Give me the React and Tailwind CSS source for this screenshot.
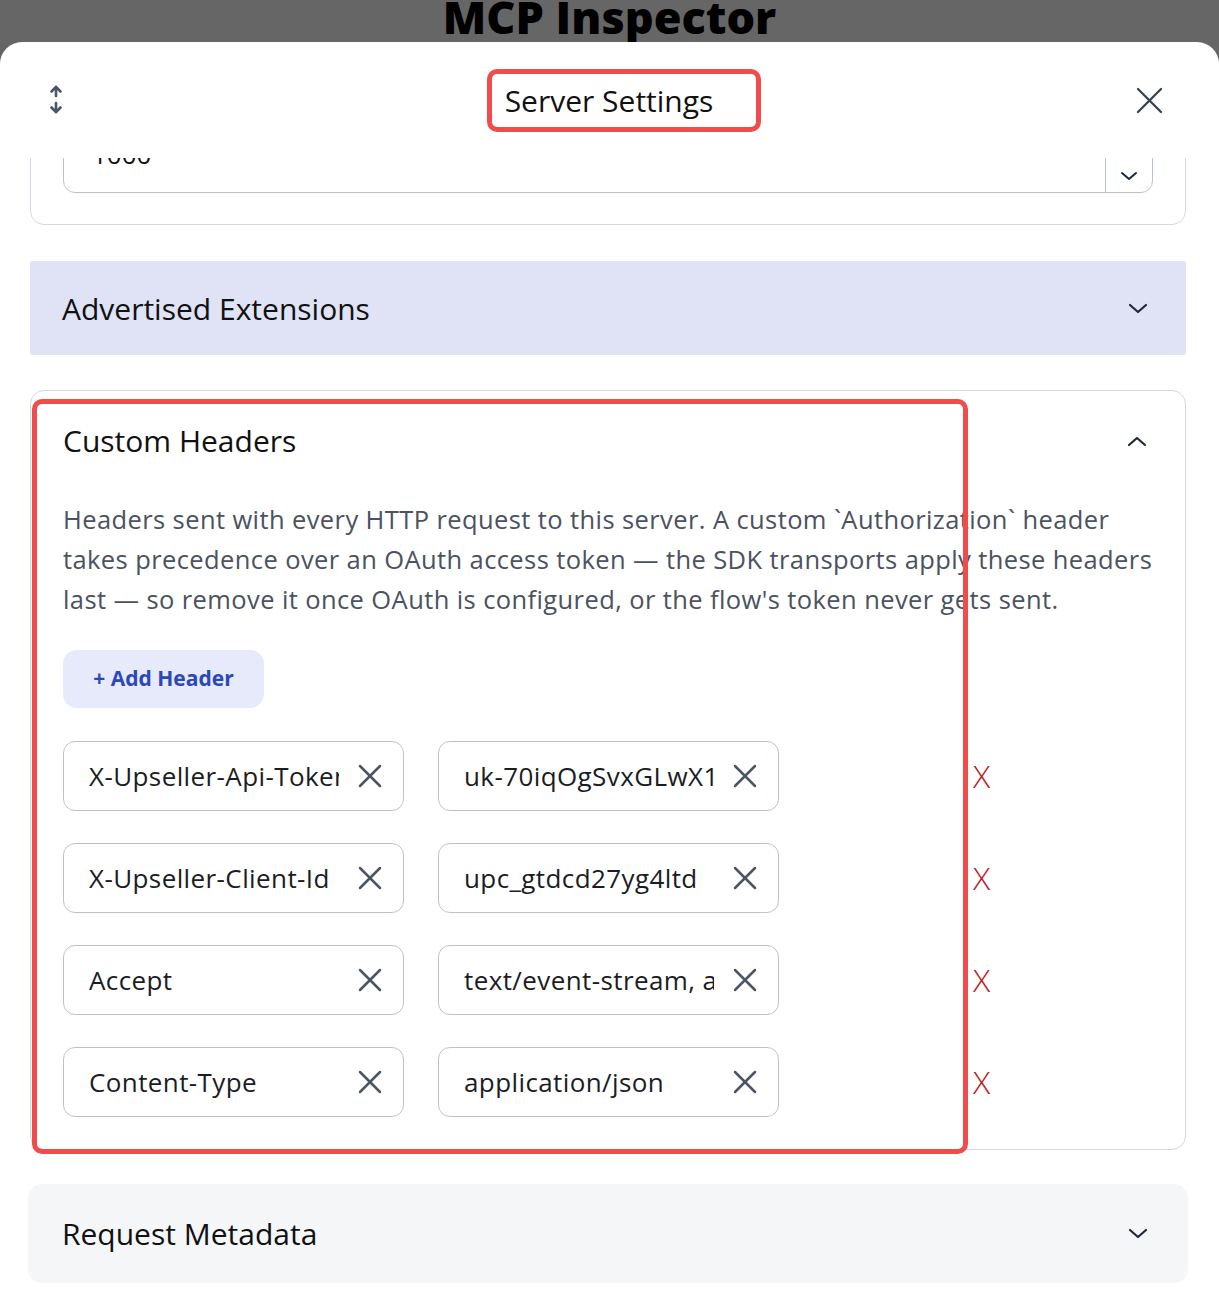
import React from "react";

const ChevronDown = ({ small }) =>
  small ? (
    <svg width="18" height="10" viewBox="0 0 18 10" fill="none">
      <polyline points="2,2 9,8 16,2" stroke="#1f2937" strokeWidth="2" strokeLinecap="round" strokeLinejoin="round" />
    </svg>
  ) : (
    <svg width="20" height="11" viewBox="0 0 20 11" fill="none">
      <polyline points="2,2 10,9 18,2" stroke="#1f2937" strokeWidth="2.2" strokeLinecap="round" strokeLinejoin="round" />
    </svg>
  );

const ChevronUp = () => (
  <svg width="20" height="11" viewBox="0 0 20 11" fill="none">
    <polyline points="2,9 10,2 18,9" stroke="#1f2937" strokeWidth="2.2" strokeLinecap="round" strokeLinejoin="round" />
  </svg>
);

const XIcon = ({ size = 24, stroke = "#4b5563", width = 2.5 }) => (
  <svg width={size} height={size} viewBox={`0 0 ${size} ${size}`} fill="none">
    <line x1="2" y1="2" x2={size - 2} y2={size - 2} stroke={stroke} strokeWidth={width} strokeLinecap="round" />
    <line x1={size - 2} y1="2" x2="2" y2={size - 2} stroke={stroke} strokeWidth={width} strokeLinecap="round" />
  </svg>
);

const ArrowsIcon = () => (
  <svg width="14" height="32" viewBox="0 0 14 32" fill="none" stroke="#4b5563" strokeWidth="2.6" strokeLinecap="round" strokeLinejoin="round">
    <line x1="7" y1="3" x2="7" y2="12" />
    <polyline points="2.5,7.5 7,3 11.5,7.5" />
    <line x1="7" y1="19" x2="7" y2="28" />
    <polyline points="2.5,23.5 7,28 11.5,23.5" />
  </svg>
);

const headers = [
  { key: "X-Upseller-Api-Token", value: "uk-70iqOgSvxGLwX1abcdef" },
  { key: "X-Upseller-Client-Id", value: "upc_gtdcd27yg4ltd" },
  { key: "Accept", value: "text/event-stream, application/json" },
  { key: "Content-Type", value: "application/json" },
];

const HeaderInput = ({ value }) => (
  <div className="flex items-center h-[70px] w-[341px] border border-[#bcc3d0] rounded-[12px] pl-[25px] pr-[21px] bg-white">
    <div className="flex-1 overflow-hidden whitespace-nowrap text-[26px] tracking-[0.4px] text-[#1a1d24]">{value}</div>
    <span className="ml-[19px] shrink-0">
      <XIcon />
    </span>
  </div>
);

export default function App() {
  return (
    <div className="h-[1304px] w-full flex flex-col bg-[#666666] overflow-hidden font-['Open_Sans',_sans-serif]">
      <div className="h-[42px] shrink-0 overflow-hidden flex justify-center">
        <h1 className="text-[45px] leading-[42px] -mt-[4px] font-extrabold text-black">MCP Inspector</h1>
      </div>

      <div className="flex-1 flex flex-col bg-white rounded-t-[22px] overflow-hidden">
        {/* header */}
        <div className="h-[116px] shrink-0 grid grid-cols-[1fr_auto_1fr] items-center pl-[49px] pr-[56px]">
          <div>
            <ArrowsIcon />
          </div>
          <div className="ml-[36px]">
            <span className="inline-block border-[5px] border-[#f24b4b] rounded-[10px] pl-[13px] pr-[43px] py-[8px] text-[30px] leading-[37px] text-[#111]">
              Server Settings
            </span>
          </div>
          <div className="flex justify-end">
            <XIcon size={27} stroke="#374151" width={2.3} />
          </div>
        </div>

        {/* scroll area */}
        <div className="flex-1 overflow-hidden">
          <div className="pl-[30px] pr-[33px] flex flex-col">
            <div className="-mt-[68px] border border-[#d3d8e2] rounded-[14px] px-8 pt-8 pb-[31px]">
              <div className="flex items-stretch h-[70px] border border-[#bcc3d0] rounded-[12px]">
                <div className="flex-1 flex items-center pl-[28px] pb-[8px] text-[26px] text-[#111]">1000</div>
                <div className="w-[47px] border-l border-[#bcc3d0] flex items-end justify-center pb-[11px]">
                  <ChevronDown small />
                </div>
              </div>
            </div>

            <div className="mt-[36px] h-[94px] bg-[#dfe3f5] rounded-[3px] flex items-center justify-between pl-8 pr-[38px]">
              <span className="text-[30px] text-[#111]">Advertised Extensions</span>
              <ChevronDown />
            </div>

            <div className="relative mt-[35px] border border-[#d3d8e2] rounded-[14px] px-8 pt-8 pb-8">
              <div className="flex items-center justify-between pr-[6px]">
                <span className="text-[30px] leading-[36px] text-[#111]">Custom Headers</span>
                <ChevronUp />
              </div>
              <p className="mt-[40px] text-[25.5px] leading-[40px] tracking-[0.4px] text-[#4b5260] whitespace-nowrap">
                Headers sent with every HTTP request to this server. A custom `Authorization` header
                <br />
                takes precedence over an OAuth access token — the SDK transports apply these headers
                <br />
                last — so remove it once OAuth is configured, or the flow's token never gets sent.
              </p>
              <button className="mt-[31px] h-[58px] w-[201px] rounded-[14px] bg-[#e6eafb] text-[21px] font-bold text-[#2b47b9]">
                + Add Header
              </button>
              <div className="mt-[33px] flex flex-col gap-8">
                {headers.map((h) => (
                  <div key={h.key} className="flex items-center gap-[34px]">
                    <HeaderInput value={h.key} />
                    <HeaderInput value={h.value} />
                    <span className="ml-[160px] text-[32px] leading-none font-light text-[#b91c24]">X</span>
                  </div>
                ))}
              </div>
              <div className="absolute left-px top-2 w-[936px] h-[755px] border-[5px] border-[#f24b4b] rounded-[10px] pointer-events-none" />
            </div>

            <div className="mt-[34px] h-[99px] bg-[#f5f6f8] rounded-[14px] flex items-center justify-between -mx-[2px] pl-[34px] pr-[40px]">
              <span className="text-[30px] text-[#111]">Request Metadata</span>
              <ChevronDown />
            </div>
          </div>
        </div>
      </div>
    </div>
  );
}
